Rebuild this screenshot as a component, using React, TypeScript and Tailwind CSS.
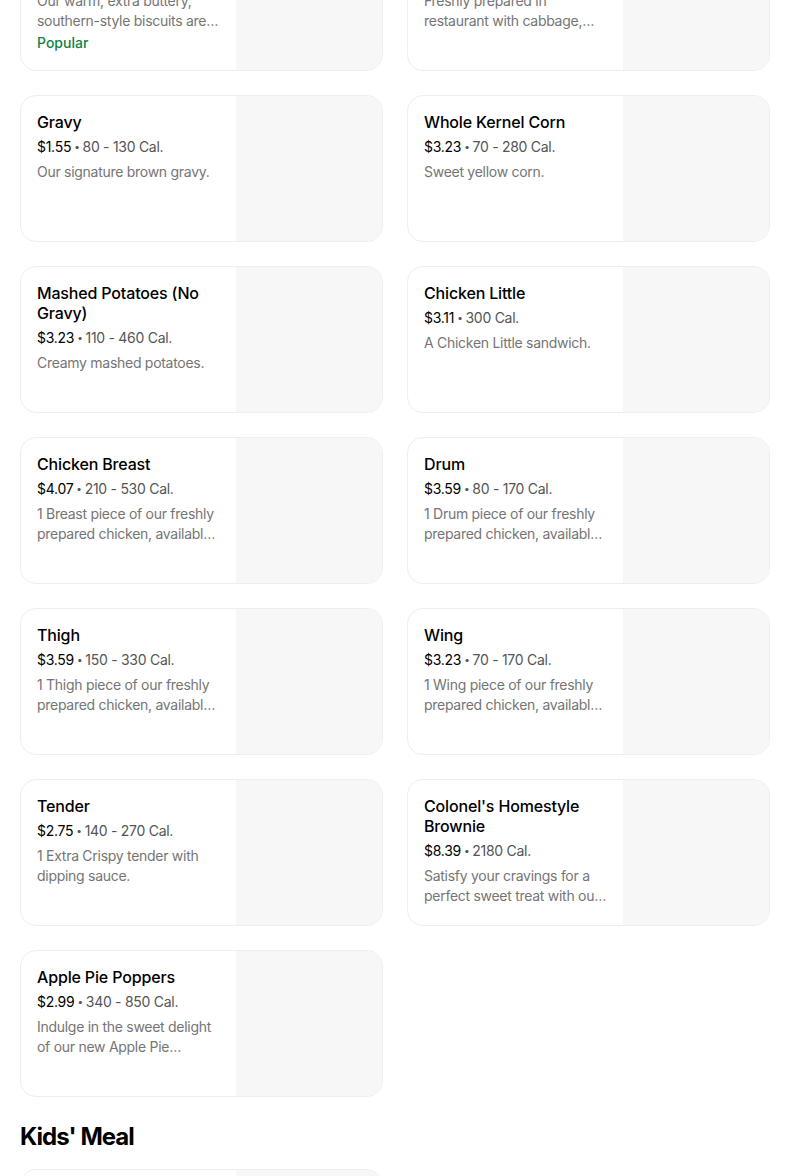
type Item = {
  name: string;
  price: string;
  cal: string;
  desc: string;
  popular?: boolean;
};

const items: Item[] = [
  { name: "Biscuit", price: "$2.15", cal: "180 Cal.", desc: "Our warm, extra buttery, southern-style biscuits are baked fresh in restaurant.", popular: true },
  { name: "Cole Slaw", price: "$3.23", cal: "540 Cal.", desc: "Freshly prepared in restaurant with cabbage, carrots and onions." },
  { name: "Gravy", price: "$1.55", cal: "80 - 130 Cal.", desc: "Our signature brown gravy." },
  { name: "Whole Kernel Corn", price: "$3.23", cal: "70 - 280 Cal.", desc: "Sweet yellow corn." },
  { name: "Mashed Potatoes (No Gravy)", price: "$3.23", cal: "110 - 460 Cal.", desc: "Creamy mashed potatoes." },
  { name: "Chicken Little", price: "$3.11", cal: "300 Cal.", desc: "A Chicken Little sandwich." },
  { name: "Chicken Breast", price: "$4.07", cal: "210 - 530 Cal.", desc: "1 Breast piece of our freshly prepared chicken, available in Original Recipe or Extra Crispy." },
  { name: "Drum", price: "$3.59", cal: "80 - 170 Cal.", desc: "1 Drum piece of our freshly prepared chicken, available in Original Recipe or Extra Crispy." },
  { name: "Thigh", price: "$3.59", cal: "150 - 330 Cal.", desc: "1 Thigh piece of our freshly prepared chicken, available in Original Recipe or Extra Crispy." },
  { name: "Wing", price: "$3.23", cal: "70 - 170 Cal.", desc: "1 Wing piece of our freshly prepared chicken, available in Original Recipe or Extra Crispy." },
  { name: "Tender", price: "$2.75", cal: "140 - 270 Cal.", desc: "1 Extra Crispy tender with dipping sauce." },
  { name: "Colonel's Homestyle Brownie", price: "$8.39", cal: "2180 Cal.", desc: "Satisfy your cravings for a perfect sweet treat with our Colonel's Homestyle Brownie." },
  { name: "Apple Pie Poppers", price: "$2.99", cal: "340 - 850 Cal.", desc: "Indulge in the sweet delight of our new Apple Pie Poppers, bite-sized pastries." },
];

function MenuCard({ item }: { item: Item }) {
  return (
    <div className="flex h-[147px] overflow-hidden rounded-2xl border border-[#eeeeee] bg-white">
      <div className="flex min-w-0 flex-1 flex-col px-4 pt-4">
        <div className="line-clamp-2 text-[16px] font-medium leading-5 tracking-[-0.01em] text-black">{item.name}</div>
        <div className="mt-[5px] text-[14px] leading-5 tracking-[-0.02em] text-[#545454]">
          <span className="text-black">{item.price}</span>
          <span className="relative -top-[2px] mx-[3px] text-[10px]">•</span>
          {item.cal}
        </div>
        <div className="mt-1 line-clamp-2 text-[14px] leading-5 tracking-[-0.02em] text-[#757575]">{item.desc}</div>
        {item.popular && <div className="mt-[2px] text-[14px] font-medium leading-5 text-[#0e8345]">Popular</div>}
      </div>
      <div className="w-[146px] shrink-0 bg-[#f7f7f7]" />
    </div>
  );
}

export default function App() {
  return (
    <div className="h-[1176px] overflow-hidden bg-white pl-5 pr-[34px] font-['Inter',sans-serif]">
      <div className="-mt-[76px] grid grid-cols-2 gap-x-6 gap-y-6">
        {items.map((item) => (
          <MenuCard key={item.name} item={item} />
        ))}
      </div>
      <h2 className="mt-6 text-[24px] font-bold leading-8 tracking-[-0.04em] text-black">Kids' Meal</h2>
      <div className="mt-4 grid grid-cols-2 gap-x-6">
        <MenuCard item={{ name: "Kids Meal", price: "$6.49", cal: "400 - 900 Cal.", desc: "A kid-sized meal with a side and a drink." }} />
      </div>
    </div>
  );
}
